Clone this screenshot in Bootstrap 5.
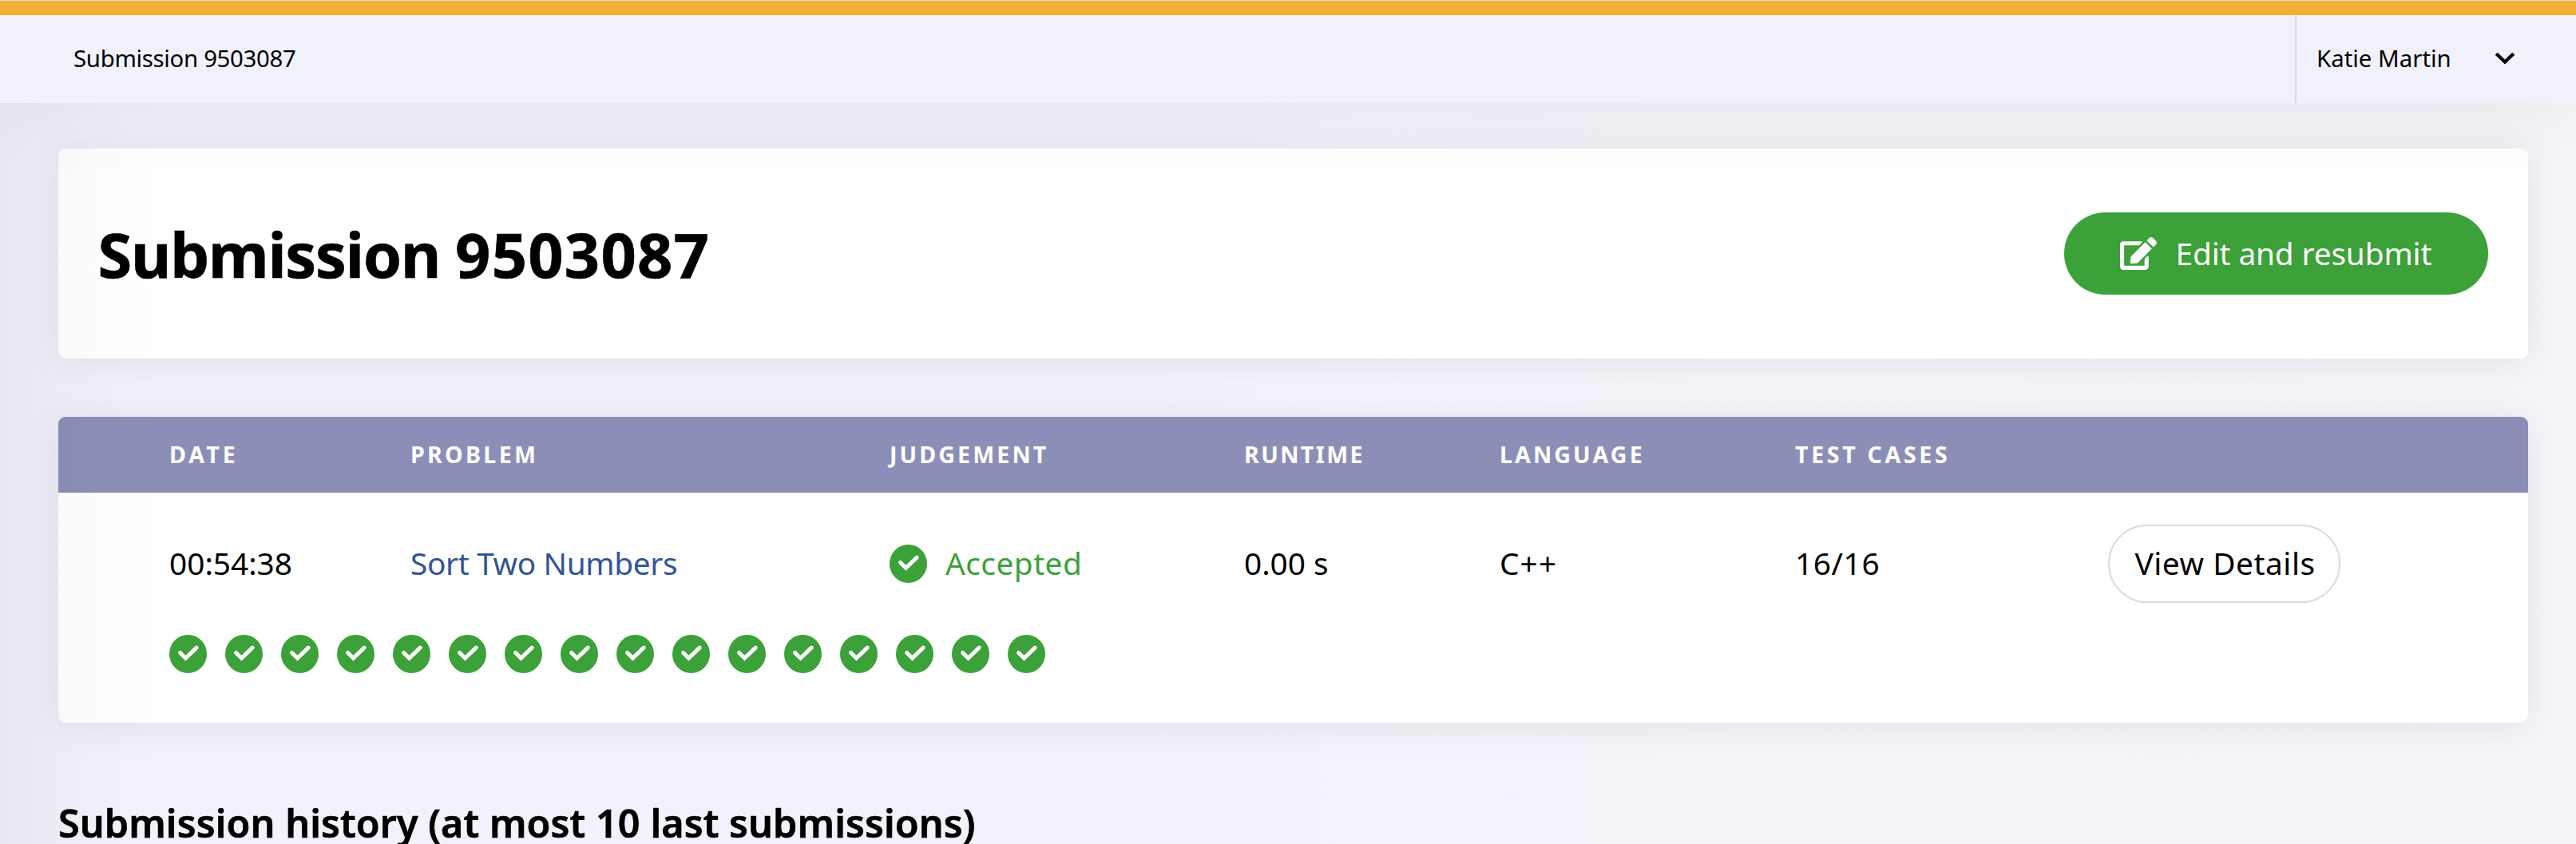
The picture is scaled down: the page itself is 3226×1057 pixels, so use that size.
<!DOCTYPE html>
<html lang="en">
<head>
<meta charset="utf-8">
<title>Submission 9503087</title>
<meta name="viewport" content="width=device-width, initial-scale=1">
<link href="https://cdn.jsdelivr.net/npm/bootstrap@5.3.0/dist/css/bootstrap.min.css" rel="stylesheet">
<style>
body{font-family:"Noto Sans","Open Sans",sans-serif;font-size:38.8px;line-height:56px;color:#000;height:1057px;overflow:hidden;
  background:linear-gradient(90deg,#f2f2fc 0,#f2f2fc 45%,#f3f5fa 68%,#f4f4f9 100%)}
.topbar{height:129px;border-top:1px solid #d9dadb;background:#f1f1fb;z-index:3;font-size:29.4px;line-height:40px;box-shadow:0 0 110px rgba(0,0,0,.07)}
.stripe{height:18px;background:#f0b034}
.crumb{padding:0 0 3px 92px;letter-spacing:-.33px}
.user{width:352px;border-left:2px solid #d9dadb;padding:0 76px 3px 25px}
.side-shade{left:0;top:0;width:220px;height:1057px;z-index:2;pointer-events:none;
  background:linear-gradient(90deg,rgba(0,0,0,.045) 0,rgba(0,0,0,.032) 20%,rgba(0,0,0,.012) 50%,rgba(0,0,0,.004) 75%,transparent)}
.page{padding:57px 60px 0 73px}
.panel{background:#fff;border-radius:9px;box-shadow:0 4px 50px rgba(0,0,0,.08)}
.title-panel{height:263px;padding:0 50px 0 49.5px;margin-bottom:73px}
h1{font-size:77.6px;line-height:100px;font-weight:700;letter-spacing:-1.25px;-webkit-text-stroke:.6px #000}
h1 .num{letter-spacing:1.2px}
.btn-edit{height:103px;width:531px;background:#3ba138;color:#fff;font-size:38.8px;gap:23.5px;letter-spacing:-.13px;padding:0 0 0 70px}
.btn-edit:hover{background:#338f30;color:#fff}
.btn-details{height:98px;width:291px;border:2px solid #d9dadb;font-size:38.8px;line-height:56px;letter-spacing:.55px;color:#000;padding:0 0 2px 2px}
.result-table{table-layout:fixed;border-collapse:separate;border-spacing:0}
.result-table th{height:95px;padding:0 0 2px;background:#8b8fb7;color:#fff;font-size:28.6px;line-height:40px;font-weight:700;letter-spacing:3.1px;vertical-align:middle;white-space:nowrap}
.result-table th:first-child{border-top-left-radius:9px}
.result-table th:last-child{border-top-right-radius:9px}
.result-table td{padding:0 0 2px;height:178px;vertical-align:middle;white-space:nowrap}
.result-table td.flush{padding:0}
.result-table .cases td{height:110px;vertical-align:top}
.result-table .c-date{letter-spacing:4px}
.result-table .c-prob{letter-spacing:3.3px}
.result-table .c-run{letter-spacing:2.4px}
.result-table .c-test{letter-spacing:3.65px}
.d-prob a{color:#315596;letter-spacing:-.35px}
.d-judge{color:#3ba138;letter-spacing:.47px}
.d-judge span{padding-bottom:2px}
.d-lang{letter-spacing:1.1px}
.d-test{letter-spacing:.6px}
.tick{width:47px;height:48px;display:block}
.ticks{gap:23px}
h2{font-size:48.5px;line-height:58px;font-weight:600;letter-spacing:.08px;margin:96px 0 0;white-space:nowrap;-webkit-text-stroke:.7px #000}
</style>
<script src="https://cdn.jsdelivr.net/npm/bootstrap@5.3.0/dist/js/bootstrap.bundle.min.js"></script>
</head>
<body>
<svg class="d-none" xmlns="http://www.w3.org/2000/svg">
  <symbol id="tick" viewBox="0 0 47 48"><ellipse cx="23.5" cy="24" rx="23.5" ry="24" fill="#3ba138"/><path d="M13.6 22.5l6.9 6.8L34.2 16.1" fill="none" stroke="#fff" stroke-width="5" stroke-linecap="round"/></symbol>
</svg>
<header class="topbar position-relative d-flex flex-column">
  <div class="stripe"></div>
  <div class="d-flex flex-fill">
    <div class="crumb d-flex align-items-center flex-fill">Submission 9503087</div>
    <div class="user d-flex align-items-center justify-content-between">
      <span>Katie Martin</span>
      <svg width="26" height="16" viewBox="0 0 26 16"><path d="M2.2 2.2L13 12.6 23.8 2.2" fill="none" stroke="#000" stroke-width="4.3"/></svg>
    </div>
  </div>
</header>
<div class="side-shade position-absolute"></div>
<main class="page">
  <section class="panel title-panel d-flex align-items-center justify-content-between">
    <h1 class="m-0">Submission <span class="num">9503087</span></h1>
    <a href="#" class="btn btn-edit rounded-pill border-0 d-flex align-items-center">
      <svg width="46" height="41" viewBox="0 0 576 512" fill="#fff"><path d="M402.6 83.2l90.2 90.2c3.8 3.8 3.8 10 0 13.8L274.4 405.6l-92.8 10.3c-12.4 1.4-22.9-9.1-21.5-21.5l10.3-92.8L388.8 83.2c3.8-3.8 10-3.8 13.8 0zm162-22.9l-48.8-48.8c-15.2-15.2-39.9-15.2-55.2 0l-35.4 35.4c-3.8 3.8-3.8 10 0 13.8l90.2 90.2c3.8 3.8 10 3.8 13.8 0l35.4-35.4c15.2-15.3 15.2-40 0-55.2zM384 346.2V448H64V128h229.8c3.2 0 6.2-1.3 8.5-3.5l40-40c7.6-7.6 2.2-20.5-8.5-20.5H48C21.5 64 0 85.5 0 112v352c0 26.5 21.5 48 48 48h352c26.5 0 48-21.5 48-48V306.2c0-10.7-12.9-16-20.5-8.5l-40 40c-2.2 2.3-3.5 5.3-3.5 8.5z"/></svg>
      <span>Edit and resubmit</span>
    </a>
  </section>
  <section class="panel">
    <table class="result-table w-100">
      <colgroup><col style="width:139px"><col style="width:302px"><col style="width:600px"><col style="width:444px"><col style="width:320px"><col style="width:370px"><col style="width:392px"><col></colgroup>
      <thead><tr><th></th><th class="c-date">DATE</th><th class="c-prob">PROBLEM</th><th>JUDGEMENT</th><th class="c-run">RUNTIME</th><th>LANGUAGE</th><th class="c-test">TEST CASES</th><th></th></tr></thead>
      <tbody>
        <tr>
          <td></td>
          <td>00:54:38</td>
          <td class="d-prob"><a href="#" class="text-decoration-none">Sort Two Numbers</a></td>
          <td class="flush"><div class="d-judge d-flex align-items-center ticks"><svg class="tick"><use href="#tick"/></svg><span>Accepted</span></div></td>
          <td>0.00 s</td>
          <td class="d-lang">C++</td>
          <td class="d-test">16/16</td>
          <td class="flush"><a href="#" class="btn btn-details rounded-pill d-flex align-items-center justify-content-center">View Details</a></td>
        </tr>
        <tr class="cases">
          <td></td>
          <td colspan="7"><div class="d-flex ticks">
            <svg class="tick"><use href="#tick"/></svg><svg class="tick"><use href="#tick"/></svg><svg class="tick"><use href="#tick"/></svg><svg class="tick"><use href="#tick"/></svg>
            <svg class="tick"><use href="#tick"/></svg><svg class="tick"><use href="#tick"/></svg><svg class="tick"><use href="#tick"/></svg><svg class="tick"><use href="#tick"/></svg>
            <svg class="tick"><use href="#tick"/></svg><svg class="tick"><use href="#tick"/></svg><svg class="tick"><use href="#tick"/></svg><svg class="tick"><use href="#tick"/></svg>
            <svg class="tick"><use href="#tick"/></svg><svg class="tick"><use href="#tick"/></svg><svg class="tick"><use href="#tick"/></svg><svg class="tick"><use href="#tick"/></svg>
          </div></td>
        </tr>
      </tbody>
    </table>
  </section>
  <h2>Submission history (at most 10 last submissions)</h2>
</main>
</body>
</html>
